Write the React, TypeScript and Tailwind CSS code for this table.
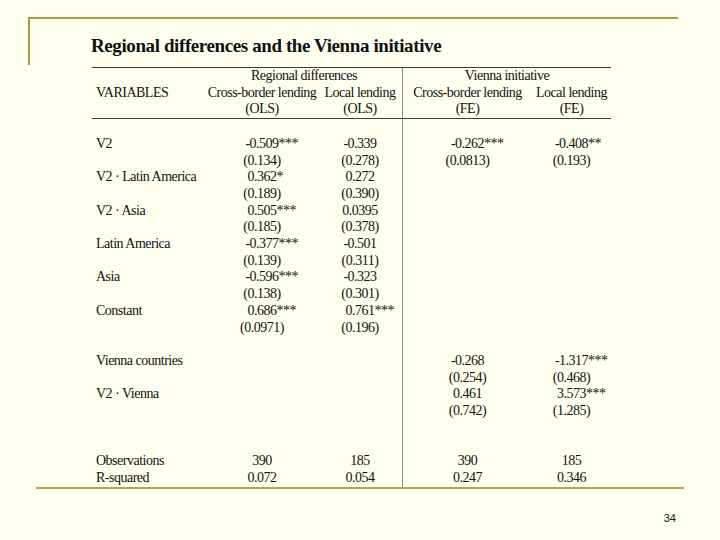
const serif = { fontFamily: '"Liberation Serif", "Times New Roman", serif' };

type Row = { label?: string; cells: (string | null)[] };

const rows: Row[] = [
  { cells: [null, null, null, null] },
  { label: "V2", cells: ["-0.509***", "-0.339", "-0.262***", "-0.408**"] },
  { cells: ["(0.134)", "(0.278)", "(0.0813)", "(0.193)"] },
  { label: "V2 · Latin America", cells: ["0.362*", "0.272", null, null] },
  { cells: ["(0.189)", "(0.390)", null, null] },
  { label: "V2 · Asia", cells: ["0.505***", "0.0395", null, null] },
  { cells: ["(0.185)", "(0.378)", null, null] },
  { label: "Latin America", cells: ["-0.377***", "-0.501", null, null] },
  { cells: ["(0.139)", "(0.311)", null, null] },
  { label: "Asia", cells: ["-0.596***", "-0.323", null, null] },
  { cells: ["(0.138)", "(0.301)", null, null] },
  { label: "Constant", cells: ["0.686***", "0.761***", null, null] },
  { cells: ["(0.0971)", "(0.196)", null, null] },
  { cells: [null, null, null, null] },
  { label: "Vienna countries", cells: [null, null, "-0.268", "-1.317***"] },
  { cells: [null, null, "(0.254)", "(0.468)"] },
  { label: "V2 · Vienna", cells: [null, null, "0.461", "3.573***"] },
  { cells: [null, null, "(0.742)", "(1.285)"] },
  { cells: [null, null, null, null] },
  { cells: [null, null, null, null] },
  { label: "Observations", cells: ["390", "185", "390", "185"] },
  { label: "R-squared", cells: ["0.072", "0.054", "0.247", "0.346"] },
];

function Value({ v }: { v: string | null }) {
  if (!v) return <span>&nbsp;</span>;
  const m = v.match(/^(.*?)(\**)$/);
  const num = m ? m[1] : v;
  const stars = m ? m[2] : "";
  return (
    <div className="grid grid-cols-[1fr_auto_1fr]">
      <span />
      <span>{num}</span>
      <span className="justify-self-start">{stars}</span>
    </div>
  );
}

const gridCols = "grid grid-cols-[114px_112px_84px_130px_79px]";

export default function App() {
  return (
    <div className="w-[720px] h-[540px] bg-[#fffff0] overflow-hidden text-[#111]">
      <div className="ml-[28px] mt-[17px] w-[650px] h-[48px] border-t-2 border-l-2 border-[#ab9a3f] pl-[61px] pt-[18px]">
        <h1 className="text-[19px] leading-[18px] font-bold tracking-[-0.4px] whitespace-nowrap" style={serif}>
          Regional differences and the Vienna initiative
        </h1>
      </div>

      <div className="ml-[92px] mt-[2px] w-[519px] text-[14px] leading-[16.7px] tracking-[-0.5px]" style={serif}>
        <div className="border-t border-b border-[#3a3a3a]">
          <div className={gridCols}>
            <span />
            <span className="col-span-2 text-center">Regional differences</span>
            <span className="col-span-2 text-center border-l border-[#888]">Vienna initiative</span>
          </div>
          <div className={gridCols}>
            <span className="pl-[4px]">VARIABLES</span>
            <span className="text-center whitespace-nowrap">Cross-border lending</span>
            <span className="text-center whitespace-nowrap">Local lending</span>
            <span className="text-center whitespace-nowrap border-l border-[#888]">Cross-border lending</span>
            <span className="text-center whitespace-nowrap">Local lending</span>
          </div>
          <div className={gridCols}>
            <span />
            <span className="text-center">(OLS)</span>
            <span className="text-center">(OLS)</span>
            <span className="text-center border-l border-[#888]">(FE)</span>
            <span className="text-center">(FE)</span>
          </div>
        </div>

        {rows.map((r, i) => (
          <div key={i} className={gridCols}>
            <span className="pl-[4px] whitespace-nowrap">{r.label ?? "\u00a0"}</span>
            <Value v={r.cells[0]} />
            <Value v={r.cells[1]} />
            <div className="border-l border-[#888]">
              <Value v={r.cells[2]} />
            </div>
            <Value v={r.cells[3]} />
          </div>
        ))}
      </div>

      <div className="ml-[36px] w-[648px] h-[2px] bg-[#b5a545]" />

      <div className="flex justify-end pr-[44px] mt-[23px]">
        <span className="text-[11px] leading-[13px]" style={{ fontFamily: '"Liberation Sans", Arial, sans-serif' }}>
          34
        </span>
      </div>
    </div>
  );
}
